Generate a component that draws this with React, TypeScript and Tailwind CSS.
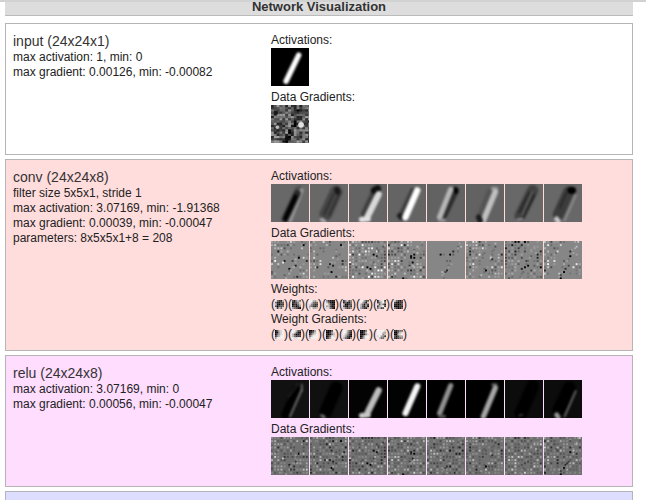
import React, { useId } from "react";

// x1, y1, x2, y2, width, grey level
type Stroke = [number, number, number, number, number, number];
type Map = { base: number; strokes: Stroke[] };

const grey = (v: number) => {
  const c = Math.max(0, Math.min(255, Math.round(v)));
  return `rgb(${c},${c},${c})`;
};

const noise = (x: number, y: number, seed: number) => {
  const n = Math.sin(x * 127.1 + y * 311.7 + seed * 74.7) * 43758.5453;
  return n - Math.floor(n);
};

const inputMap: Map = { base: 0, strokes: [[17.5, 4.5, 9.5, 21, 3.4, 255]] };

const convMaps: Map[] = [
  { base: 104, strokes: [[19.5, 4, 12, 23, 2.5, 150], [16, 3, 18, 2, 2, 80], [16.5, 6, 9, 22, 4.5, 40], [15.5, 8, 9, 22, 2.5, 0]] },
  { base: 104, strokes: [[16.5, 5, 10, 19, 8, 70], [15, 6, 9, 19, 1, 42], [18.5, 6, 12, 20, 1, 45], [17, 3.5, 17.5, 5, 3.5, 25], [7.5, 22.5, 9, 23.5, 2.5, 165]] },
  { base: 100, strokes: [[15, 6, 9, 19, 3, 62], [16, 4, 18, 3, 4.5, 15], [18.7, 6.5, 12, 20, 4, 218], [8, 22.5, 12, 22, 3.5, 225]] },
  { base: 100, strokes: [[15.5, 4, 8, 20, 3, 62], [7.5, 20, 8.5, 21, 3.5, 28], [18.5, 4, 11, 21, 4, 255]] },
  { base: 98, strokes: [[18.5, 4, 11, 20, 3.5, 45], [18, 3, 18.5, 5, 2.5, 0], [15, 3.5, 8, 21, 3.4, 182], [8, 23, 11, 23, 2, 145]] },
  { base: 98, strokes: [[15, 5, 9, 20, 4, 84], [17, 3, 19, 3, 2.5, 155], [18.5, 5, 11, 23, 3.6, 192], [8, 21, 9, 23, 3.5, 28]] },
  { base: 104, strokes: [[17.5, 4, 9.5, 20, 7, 66], [15.5, 5, 9, 18, 1.2, 35], [18.5, 7, 11, 22, 1.2, 30], [17, 5, 11, 20, 1, 95], [8, 22.5, 11, 22, 1.2, 160]] },
  { base: 104, strokes: [[15.5, 5, 9, 19.5, 7, 60], [17, 4, 18, 4, 4.5, 0], [20, 7, 13, 23, 1.2, 145], [8, 22, 9, 23.5, 3, 200], [14, 6, 10, 15, 1, 38]] },
];

const reluMaps: Map[] = [
  { base: 17, strokes: [[16, 6, 9, 22, 5, 0], [19.5, 3, 19.5, 7, 1.3, 90], [19.5, 6, 12, 23, 1.3, 105], [17, 2.5, 11, 11, 1, 35]] },
  { base: 16, strokes: [[16.5, 5, 10, 20, 8, 0], [7.5, 22.5, 9, 23.5, 2, 110]] },
  { base: 3, strokes: [[18.7, 6.5, 12, 20, 4, 190], [8, 22.5, 12, 22, 3.5, 200]] },
  { base: 2, strokes: [[18.5, 4, 11, 21, 3.8, 245]] },
  { base: 0, strokes: [[15, 3.5, 8, 21, 3.2, 145], [8, 23, 11, 23, 2, 85]] },
  { base: 0, strokes: [[17, 3, 19, 3, 2, 95], [18.5, 5, 11, 23, 3.4, 165]] },
  { base: 12, strokes: [[17.5, 4, 10, 21, 8, 0], [9, 22.5, 11, 22, 1, 65]] },
  { base: 12, strokes: [[16, 5, 9, 20, 8, 0], [20, 7, 13, 23, 1.2, 105], [8, 22, 9, 23.5, 3, 150]] },
];

function ActivationTile({ map, label }: { map: Map; label: string }) {
  const id = useId().replace(/[^a-zA-Z0-9]/g, "");
  return (
    <svg viewBox="0 0 24 24" role="img" aria-label={label} className="block size-[38px] shrink-0 overflow-hidden">
      <filter id={id} x="0" y="0" width="24" height="24" filterUnits="userSpaceOnUse" colorInterpolationFilters="sRGB">
        <feGaussianBlur stdDeviation="0.6" />
      </filter>
      <rect width="24" height="24" fill={grey(map.base)} />
      <g filter={`url(#${id})`}>
        {map.strokes.map(([x1, y1, x2, y2, w, v], i) => (
          <line key={i} x1={x1} y1={y1} x2={x2} y2={y2} stroke={grey(v)} strokeWidth={w} strokeLinecap="round" />
        ))}
      </g>
    </svg>
  );
}

// Horizontal distance from the slanted pen stroke of the digit
const offStroke = (x: number, y: number) => x - (19 - y * 0.46);

type DotStyle = { base: number; density: number; contrast: number; clear: number; seed: number; bright?: number };

function GradientTile({ dots, label }: { dots: DotStyle; label: string }) {
  const cells: React.ReactElement[] = [];
  for (let y = 0; y < 12; y++) {
    for (let x = 0; x < 12; x++) {
      const d = offStroke(x * 2, y * 2);
      const onStroke = Math.abs(d) < 2;
      const shift = onStroke || noise(x, y, dots.seed + 4) > 0.94;
      const cx = x * 2 + (shift && noise(x, y, dots.seed + 3) > 0.5 ? 1 : 0);
      const cy = y * 2 + (shift && noise(y, x, dots.seed + 5) > 0.5 ? 1 : 0);
      const inGap = !onStroke && Math.abs(d) < dots.clear;
      const odds = onStroke ? 0.75 : inGap ? 0.04 : dots.density;
      if (noise(x, y, dots.seed) > odds) continue;
      const r = noise(x, y, dots.seed + 9) * 2 - 1 + (dots.bright ?? 0) - (onStroke ? 0.25 : 0);
      const strength = dots.contrast * (onStroke ? 1.3 : 1);
      cells.push(
        <rect key={`${x}-${y}`} x={cx} y={cy} width="1.2" height="1.2" fill={grey(dots.base + r * r * r * strength + Math.sign(r) * 20)} />,
      );
    }
  }
  return (
    <svg viewBox="0 0 24 24" role="img" aria-label={label} className="block size-[38px] shrink-0 overflow-hidden">
      <rect width="24" height="24" fill={grey(dots.base)} />
      {cells}
    </svg>
  );
}

const convGradients: DotStyle[] = [
  { base: 134, density: 0.6, contrast: 105, clear: 5, seed: 1 },
  { base: 134, density: 0.55, contrast: 90, clear: 6, seed: 12 },
  { base: 134, density: 0.95, contrast: 105, clear: 3, seed: 23, bright: 0.15 },
  { base: 134, density: 0.9, contrast: 100, clear: 4, seed: 34 },
  { base: 134, density: 0.03, contrast: 130, clear: 2, seed: 46 },
  { base: 134, density: 0.8, contrast: 95, clear: 4, seed: 56 },
  { base: 134, density: 0.75, contrast: 70, clear: 4, seed: 67, bright: -0.3 },
  { base: 134, density: 0.6, contrast: 95, clear: 6, seed: 78 },
];

const reluGradients: DotStyle[] = convGradients.map((g, i) => ({
  ...g,
  base: 112,
  density: 0.9,
  contrast: 65,
  clear: 1,
  bright: i % 3 === 0 ? 0.1 : 0,
}));

function InputGradientTile() {
  const id = useId().replace(/[^a-zA-Z0-9]/g, "");
  const cells: React.ReactElement[] = [];
  for (let y = 0; y < 18; y++) {
    for (let x = 0; x < 14; x++) {
      const cx = x * 1.8;
      const cy = y * 1.4;
      const dark = Math.abs(offStroke(cx, cy)) < 2 ? -40 : 0;
      const v = 98 + (noise(x, y, 6) - 0.5) * 140 + dark;
      cells.push(<rect key={`${x}-${y}`} x={cx} y={cy} width="1.85" height="1.45" fill={grey(v)} />);
    }
  }
  return (
    <svg viewBox="0 0 24 24" role="img" aria-label="Input data gradient" className="block size-[38px] shrink-0 overflow-hidden">
      <filter id={id} x="0" y="0" width="24" height="24" filterUnits="userSpaceOnUse" colorInterpolationFilters="sRGB">
        <feGaussianBlur stdDeviation="0.5" />
      </filter>
      <rect width="24" height="24" fill={grey(85)} />
      <g filter={`url(#${id})`}>
        {cells}
        <circle cx="19" cy="12.5" r="1.8" fill={grey(225)} />
        <circle cx="4" cy="14" r="1.1" fill={grey(190)} />
        <circle cx="10" cy="21.5" r="1.3" fill={grey(15)} />
        <circle cx="3" cy="5" r="1.4" fill={grey(25)} />
      </g>
    </svg>
  );
}

// 5x5 kernels, one digit per cell from 0 (black) to 9 (white)
const weights = [
  "9421741133710223033482748",
  "3157412358021471302564310",
  "9976898434853226421379667",
  "5211174100973106730188420",
  "2583514114700233104274235",
  "9963397418741527315064217",
  "1789224795837412689247239",
  "8421331022110130002142013",
];
const weightGradients = [
  "0378901689046892579969999",
  "9973398410730127422298899",
  "0026902479147894799979999",
  "1003900268101470249813699",
  "9974299631975208631074205",
  "0014900379001580279914799",
  "9999899976999578965297448",
  "2134400478007893136621345",
];

function Kernel({ values, label }: { values: string; label: string }) {
  const id = useId().replace(/[^a-zA-Z0-9]/g, "");
  return (
    <svg viewBox="0 0 5 5" role="img" aria-label={label} className="block size-[9px] overflow-hidden">
      <filter id={id} x="0" y="0" width="5" height="5" filterUnits="userSpaceOnUse" colorInterpolationFilters="sRGB">
        <feGaussianBlur stdDeviation="0.3" />
      </filter>
      <g filter={`url(#${id})`}>
        {values.split("").map((c, j) => (
          <rect key={j} x={j % 5} y={Math.floor(j / 5)} width="1.02" height="1.02" fill={grey(Number(c) * 27)} />
        ))}
      </g>
    </svg>
  );
}

function Kernels({ kernels, name }: { kernels: string[]; name: string }) {
  return (
    <div className="flex h-[15px] items-center">
      {kernels.map((k, i) => (
        <span key={i} className="flex items-center">
          (
          <Kernel values={k} label={`${name} ${i + 1}`} />
          )
        </span>
      ))}
    </div>
  );
}

function TileRow({ title, children }: { title: string; children: React.ReactNode }) {
  return (
    <div className="mb-[3px]">
      <div className="h-4 leading-4">{title}</div>
      <div className="flex gap-px">{children}</div>
    </div>
  );
}

function Layer({ title, stats, tone, children }: { title: string; stats: string[]; tone: string; children?: React.ReactNode }) {
  return (
    <section className={`flex border border-[#b5b5b5] p-2 pl-[7px] ${tone}`}>
      <div className="w-[258px] shrink-0">
        <h3 className="text-sm leading-[18px] text-[#333]">{title}</h3>
        {stats.map((s) => (
          <p key={s}>{s}</p>
        ))}
      </div>
      <div className="min-w-0 flex-1">{children}</div>
    </section>
  );
}

export default function App() {
  return (
    <div className="h-screen overflow-hidden border-t-2 border-[#d2d2d2] bg-white font-['Liberation_Sans',Arial,sans-serif] text-xs leading-[15px] text-[#222]">
      <main className="mr-[13px] ml-[5px]">
        <h2 className="flex h-[14px] items-end justify-center border-b border-[#bbb] bg-[#ddd] text-[13px] leading-4 font-bold text-[#333]">
          Network Visualization
        </h2>
        <div className="mt-[7px] flex flex-col gap-1">
          <Layer title="input (24x24x1)" stats={["max activation: 1, min: 0", "max gradient: 0.00126, min: -0.00082"]} tone="bg-white">
            <TileRow title="Activations:">
              <ActivationTile map={inputMap} label="Input activation" />
            </TileRow>
            <TileRow title="Data Gradients:">
              <InputGradientTile />
            </TileRow>
          </Layer>
          <Layer
            title="conv (24x24x8)"
            stats={[
              "filter size 5x5x1, stride 1",
              "max activation: 3.07169, min: -1.91368",
              "max gradient: 0.00039, min: -0.00047",
              "parameters: 8x5x5x1+8 = 208",
            ]}
            tone="bg-[#ffdddd]"
          >
            <TileRow title="Activations:">
              {convMaps.map((m, i) => (
                <ActivationTile key={i} map={m} label={`Conv activation ${i + 1}`} />
              ))}
            </TileRow>
            <TileRow title="Data Gradients:">
              {convGradients.map((g, i) => (
                <GradientTile key={i} dots={g} label={`Conv gradient ${i + 1}`} />
              ))}
            </TileRow>
            <div>Weights:</div>
            <Kernels kernels={weights} name="Weight" />
            <div>Weight Gradients:</div>
            <Kernels kernels={weightGradients} name="Weight gradient" />
          </Layer>
          <Layer title="relu (24x24x8)" stats={["max activation: 3.07169, min: 0", "max gradient: 0.00056, min: -0.00047"]} tone="bg-[#ffddff]">
            <TileRow title="Activations:">
              {reluMaps.map((m, i) => (
                <ActivationTile key={i} map={m} label={`Relu activation ${i + 1}`} />
              ))}
            </TileRow>
            <TileRow title="Data Gradients:">
              {reluGradients.map((g, i) => (
                <GradientTile key={i} dots={g} label={`Relu gradient ${i + 1}`} />
              ))}
            </TileRow>
          </Layer>
          <section className="h-32 border border-[#b5b5b5] bg-[#ddddff]" />
        </div>
      </main>
    </div>
  );
}
